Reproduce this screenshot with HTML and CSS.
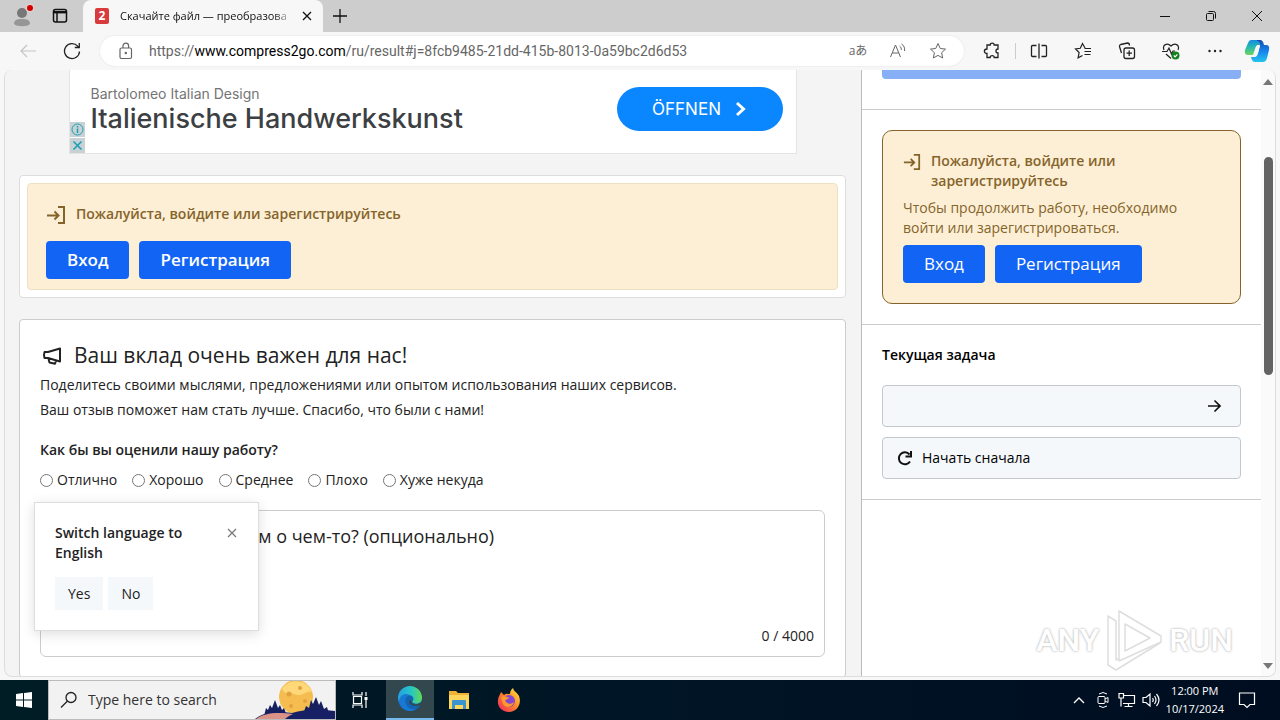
FILE: index.html
```html
<!DOCTYPE html>
<html lang="ru">
<head>
<meta charset="utf-8">
<title>Скачайте файл — преобразование</title>
<link rel="stylesheet" href="styles.css">
</head>
<body>
<header class="tabstrip">
  <button class="profile" aria-label="Profile">
    <svg width="24" height="24" viewBox="0 0 24 24"><circle cx="12" cy="9" r="5" fill="#777"/><path d="M4 20c0-4 3-5 8-5s8 1 8 5c-3 3-13 3-16 0z" fill="#969696"/><circle cx="20" cy="4" r="4" fill="#e8d0d0"/><circle cx="20" cy="4" r="3" fill="#d00000"/></svg>
  </button>
  <button class="workspaces" aria-label="Tab actions">
    <svg width="16" height="16" viewBox="0 0 16 16" fill="none" stroke="#111" stroke-width="1.5"><rect x="1.5" y="1.5" width="13" height="12.5" rx="2"/><path d="M1.5 4.2h13" stroke-width="2.4"/><path d="M5 4v10"/></svg>
  </button>
  <div class="tab">
    <span class="favicon">2</span>
    <span class="tab-title">Скачайте файл — преобразова</span>
    <button class="tab-close" aria-label="Close tab"><svg width="10" height="10" viewBox="0 0 10 10" stroke="#111" stroke-width="1.3"><path d="M1 1l8 8M9 1l-8 8"/></svg></button>
  </div>
  <button class="new-tab" aria-label="New tab"><svg width="14" height="14" viewBox="0 0 14 14" stroke="#111" stroke-width="1.3"><path d="M7 0v14M0 7h14"/></svg></button>
  <div class="window-controls">
    <button aria-label="Minimize"><svg width="12" height="12" viewBox="0 0 12 12" stroke="#111"><path d="M1 6.5h10"/></svg></button>
    <button aria-label="Restore"><svg width="12" height="12" viewBox="0 0 12 12" fill="none" stroke="#111"><rect x="1.5" y="3.5" width="7" height="7" rx="1"/><path d="M3.5 1.5h5a2 2 0 0 1 2 2v5"/></svg></button>
    <button aria-label="Close"><svg width="12" height="12" viewBox="0 0 12 12" stroke="#111"><path d="M1 1l10 10M11 1L1 11"/></svg></button>
  </div>
</header>

<nav class="toolbar">
  <button class="tool" aria-label="Back"><svg width="18" height="18" viewBox="0 0 18 18" fill="none" stroke="#c4c4c4" stroke-width="1.2"><path d="M17 9H2M8 3L2 9l6 6"/></svg></button>
  <button class="tool" aria-label="Refresh"><svg width="18" height="18" viewBox="0 0 18 18" fill="none" stroke="#222" stroke-width="1.3"><path d="M16.5 9.500a7.500 7.500 0 1 1-1.800-5.300L16 5.500M16.300 1v4.500h-4.500"/></svg></button>
  <div class="address">
    <svg width="16" height="18" viewBox="0 0 16 18" fill="none" stroke="#666" stroke-width="1.200"><rect x="2" y="6" width="11.500" height="10.500" rx="1.500"/><path d="M5 6V4a2.800 2.800 0 0 1 5.600 0v2"/><circle cx="7.800" cy="11" r=".6" fill="#666"/></svg>
    <span class="url">https://<b>www.compress2go.com</b>/ru/result#j=8fcb9485-21dd-415b-8013-0a59bc2d6d53</span>
    <button class="address-tool translate" aria-label="Translate">aあ</button>
    <button class="address-tool" aria-label="Read aloud"><svg width="18" height="18" viewBox="0 0 18 18" fill="none" stroke="#666"><path d="M1.500 15L6.500 3l5 12M3.200 11h6.600M10.500 4c1.500 1 2 2.500 1.800 4M12.500 2c2.500 1.500 3.500 4 3 7"/></svg></button>
    <button class="address-tool" aria-label="Favourite"><svg width="18" height="18" viewBox="0 0 18 18" fill="none" stroke="#666"><path d="M9 1.500l2.300 5 5.200.600-3.900 3.600 1.100 5.300L9 13.400 4.300 16l1.100-5.300L1.500 7.100l5.200-.6z"/></svg></button>
  </div>
  <button class="tool ext" aria-label="Extensions"><svg width="18" height="18" viewBox="0 0 18 18" fill="none" stroke="#222" stroke-width="1.300"><path d="M4 3h3.200c0-2.500 4-2.500 4 0H15v4c-2.700 0-2.700 4 0 4v4.500h-3.800c0-2.500-4-2.500-4 0H4V11.500c-3.500 0-3.500-4.500 0-4.500z"/></svg></button>
  <span class="tool-divider"></span>
  <button class="tool" aria-label="Split screen"><svg width="18" height="18" viewBox="0 0 18 18" fill="none" stroke="#222" stroke-width="1.300"><path d="M6.500 3.500h-4q-1 0-1 1v9q0 1 1 1h4M11.500 3.500h4q1 0 1 1v9q0 1-1 1h-4M9 1.500v15"/></svg></button>
  <button class="tool" aria-label="Favourites"><svg width="18" height="18" viewBox="0 0 18 18" fill="none" stroke="#222" stroke-width="1.200"><path d="M11 6L8.500 1.500 6.300 6.300 1.500 7l3.600 3.500-1 5.300L8.500 13.500M10.500 6.500h6.500M10.500 9.500h6.500M10.500 12.500h6"/></svg></button>
  <button class="tool" aria-label="Collections"><svg width="18" height="18" viewBox="0 0 18 18" fill="none" stroke="#222" stroke-width="1.300"><rect x="6" y="6" width="10.500" height="10.500" rx="2"/><path d="M11.200 8.500v5.500M8.500 11.200H14M3.500 11L1.500 4.500Q1.200 3 2.700 2.500L9.500 1q2 0 2 2.500"/></svg></button>
  <button class="tool" aria-label="Browser essentials"><svg width="18" height="18" viewBox="0 0 18 18" fill="none" stroke="#222" stroke-width="1.200"><path d="M2 8C0 3 5 0 9 4c4-4 9-1 7 4M0 9.500h5l2-3.500 2.500 6 1.500-3h2M4 12l5 4.500"/><circle cx="13.500" cy="13.500" r="4" fill="#15801e" stroke="none"/><path d="M11.800 13.500l1.300 1.300 2.300-2.500" stroke="#fff"/></svg></button>
  <button class="tool" aria-label="Settings and more"><svg width="18" height="18" viewBox="0 0 18 18" fill="#222"><circle cx="3.500" cy="9" r="1.200"/><circle cx="9" cy="9" r="1.200"/><circle cx="14.500" cy="9" r="1.200"/></svg></button>
  <button class="tool copilot" aria-label="Copilot"><svg width="26" height="24" viewBox="0 0 26 24"><defs><linearGradient id="cp1" x2="0" y2="1"><stop offset="0" stop-color="#1789e0"/><stop offset=".45" stop-color="#24b8b4"/><stop offset="1" stop-color="#6bd65c"/></linearGradient><linearGradient id="cp2" x2="0" y2="1"><stop offset="0" stop-color="#164dab"/><stop offset=".5" stop-color="#1683ed"/><stop offset="1" stop-color="#23c4ee"/></linearGradient></defs><path d="M7 1h8q3 0 4 5h-5q-2 0-3 4l-2 6H4q-4 0-3-5l3-7q1-3 3-3z" fill="url(#cp1)"/><path d="M13 1h3q3 0 4 5h2q4 0 3 5l-2 8q-1 4-4 4h-8q-3 0-4-5h4q2 0 3-4l2-8q0-4-3-4z" fill="url(#cp2)"/><path d="M13 9q1-2 3-2l-2 7q-1 3-3 3z" fill="#f7f7f7"/></svg></button>
</nav>

<div class="page">
  <main class="content">
    <aside class="ad">
      <div class="ad-copy">
        <span class="ad-brand">Bartolomeo Italian Design</span>
        <span class="ad-title">Italienische Handwerkskunst</span>
      </div>
      <button class="ad-button">ÖFFNEN <svg width="12" height="16" viewBox="0 0 12 16" fill="none" stroke="#fff" stroke-width="3"><path d="M2 2l6.500 6L2 14"/></svg></button>
      <div class="ad-marks">
        <svg width="15" height="15" viewBox="0 0 15 15" fill="none" stroke="#1b9fb5"><circle cx="7.500" cy="7.500" r="5.500"/><path d="M7.500 4v1.500M7.500 6.500V11" stroke-width="1.500"/></svg>
        <svg width="15" height="15" viewBox="0 0 15 15" stroke="#1b9fb5" stroke-width="1.600"><path d="M3.500 3.500l8 8M11.500 3.500l-8 8"/></svg>
      </div>
    </aside>

    <section class="card login-card">
      <div class="notice">
        <h2 class="notice-title"><svg width="20" height="22" viewBox="0 0 20 22" fill="none" stroke="#85642b" stroke-width="2"><path d="M1 11.500h11M8.500 7.500l4 4-4 4M12 3h6v16h-6"/></svg>Пожалуйста, войдите или зарегистрируйтесь</h2>
        <div class="actions"><button class="primary strong">Вход</button><button class="primary strong">Регистрация</button></div>
      </div>
    </section>

    <section class="card feedback">
      <h1 class="feedback-title"><svg width="22" height="20" viewBox="0 0 22 20" fill="none" stroke="#222" stroke-width="2" stroke-linejoin="round"><path d="M8 6L20 2.500v13L8 12H4.500q-1-3 0-6zM8.500 13l1 3.500 5.500 1.200 1-3"/></svg>Ваш вклад очень важен для нас!</h1>
      <p class="lead">Поделитесь своими мыслями, предложениями или опытом использования наших сервисов.</p>
      <p class="lead">Ваш отзыв поможет нам стать лучше. Спасибо, что были с нами!</p>
      <fieldset class="rating">
        <legend>Как бы вы оценили нашу работу?</legend>
        <div class="options">
          <label><input type="radio" name="rating">Отлично</label>
          <label><input type="radio" name="rating">Хорошо</label>
          <label><input type="radio" name="rating">Среднее</label>
          <label><input type="radio" name="rating">Плохо</label>
          <label><input type="radio" name="rating">Хуже некуда</label>
        </div>
      </fieldset>
      <div class="message">
        <textarea aria-label="Сообщение" placeholder="Вы хотите сообщить нам о чем-то? (опционально)"></textarea>
        <span class="counter">0 / 4000</span>
      </div>
    </section>
  </main>

  <aside class="sidebar">
    <section class="start"><button class="start-button" aria-label="Начать"></button></section>
    <section class="panel">
      <div class="notice bordered">
        <h2 class="notice-title"><svg width="18" height="22" viewBox="0 0 20 22" fill="none" stroke="#85642b" stroke-width="2"><path d="M1 11.500h11M8.500 7.500l4 4-4 4M12 3h6v16h-6"/></svg>Пожалуйста, войдите или зарегистрируйтесь</h2>
        <p class="notice-text">Чтобы продолжить работу, необходимо войти или зарегистрироваться.</p>
        <div class="actions"><button class="primary">Вход</button><button class="primary">Регистрация</button></div>
      </div>
    </section>
    <section class="panel">
      <h2 class="task-title">Текущая задача</h2>
      <div class="task-list">
        <button class="task next" aria-label="Далее"><svg width="14" height="14" viewBox="0 0 14 14" fill="none" stroke="#111" stroke-width="1.600"><path d="M1 7h12M7.500 1.500L13 7l-5.500 5.500"/></svg></button>
        <button class="task"><svg width="16" height="16" viewBox="0 0 16 16" fill="none" stroke="#111" stroke-width="2"><path d="M13 11.500A6 6 0 1 1 12.500 4.500M14 1v5.500H8.500"/></svg>Начать сначала</button>
      </div>
    </section>
  </aside>

  <div class="scrollbar">
    <svg width="10" height="8" viewBox="0 0 10 8" fill="#777"><path d="M0 7l5-6 5 6z"/></svg>
    <div class="track"><div class="thumb"></div></div>
    <svg width="10" height="8" viewBox="0 0 10 8" fill="#777"><path d="M0 1l5 6 5-6z"/></svg>
  </div>

  <div class="language" role="dialog" aria-labelledby="lang-title">
    <div class="language-head">
      <h2 id="lang-title">Switch language to English</h2>
      <button class="language-close" aria-label="Close"><svg width="10" height="10" viewBox="0 0 10 10" stroke="#777" stroke-width="1.200"><path d="M1 1l8 8M9 1l-8 8"/></svg></button>
    </div>
    <div class="language-actions"><button>Yes</button><button>No</button></div>
  </div>

  <div class="watermark">
    <span>ANY</span>
    <svg width="58" height="64" viewBox="0 0 58 64" fill="#fff" stroke="#dedede" stroke-width="1.500" stroke-linejoin="round"><path d="M3 8l8 5v39l41-22 3 5L11 62l-8-5z"/><path fill-rule="evenodd" d="M14 3l42 25v6L14 53zM20 16v27l25-13z"/></svg>
    <span>RUN</span>
  </div>
</div>

<footer class="taskbar">
  <button class="start-menu" aria-label="Start"><svg width="16" height="16" viewBox="0 0 16 16" fill="#fff"><path d="M0 2l7-1v6.500H0zM8 .900L16 0v7.500H8zM0 8.500h7V15l-7-1zM8 8.500h8V16l-8-1z"/></svg></button>
  <div class="search">
    <svg width="18" height="18" viewBox="0 0 18 18" fill="none" stroke="#222" stroke-width="1.300"><circle cx="11" cy="6.500" r="5"/><path d="M7.500 10L1 16.500"/></svg>
    <input type="text" aria-label="Search" placeholder="Type here to search">
    <svg width="80" height="38" viewBox="0 0 80 38"><circle cx="41" cy="16" r="17" fill="#f5bd4f"/><path d="M27 8a17 17 0 0 1 30 3c-5-3-10 6-18 2-5-2-8 2-12-5z" fill="#ffd979"/><g fill="#e3a040"><circle cx="34" cy="13" r="2.500"/><circle cx="45" cy="7" r="2"/><circle cx="36" cy="25" r="2"/><circle cx="50" cy="20" r="2"/></g><path d="M9 35l2-8 2 2 2-5 2 3 3-8 3 8 2-3 2 5 2-2 3 8zM48 33l3-8 3 2 2-8 2 4 3-7 3 8 2-4 3 8 3-2 2 7z" fill="#16205f"/><path d="M0 38c9-7 22-8 37-6 13-4 27-4 43-2v8z" fill="#172064"/><path d="M1 38c8-6 20-7 37-5-4 2-6 3-8 5z" fill="#db9388"/></svg>
  </div>
  <button class="app" aria-label="Task View"><svg width="18" height="18" viewBox="0 0 18 18" fill="none" stroke="#fff" stroke-width="1.200"><path d="M1 1v3h9V1M1 17v-3h9v3M1.500 5.500h8v7h-8zM14 1v4M14 9v8"/><path d="M12.500 6h3v3h-3z" fill="#fff" stroke="none"/></svg></button>
  <button class="app active" aria-label="Microsoft Edge"><svg width="26" height="26" viewBox="0 0 26 26"><defs><linearGradient id="edge"><stop offset="0" stop-color="#249fe6"/><stop offset=".55" stop-color="#27c6c4"/><stop offset="1" stop-color="#63d957"/></linearGradient></defs><circle cx="13" cy="13" r="12" fill="#1265b5"/><path d="M1 12a12 12 0 0 1 24 0c0 6-7 7-10 4 3-3 1-7-3-7-5 0-8 3-9 8-1-1-2-3-2-5z" fill="url(#edge)"/><path d="M2 15c1-7 8-9 12-5-5-1-7 4-5 8 2 5 7 6 10 5-7 5-16 0-17-8z" fill="#1979d2"/><path d="M14 14c0 5 6 6 11 2l-1 3c-4 2-11 1-12-3 0-1 1-2 2-2z" fill="#36474d"/></svg></button>
  <button class="app" aria-label="File Explorer"><svg width="22" height="20" viewBox="0 0 22 20"><path d="M1 1h7l2 2h11v16H1z" fill="#eeb333"/><path d="M1 5h20v14H1z" fill="#ffd65c"/><path d="M4 11q0-1 1-1h12q1 0 1 1v8h-3v-4H7v4H4z" fill="#3b94cf"/></svg></button>
  <button class="app" aria-label="Firefox"><svg width="24" height="24" viewBox="0 0 24 24"><defs><linearGradient id="fox" x1="1" x2="0" y2="1"><stop offset="0" stop-color="#fff04a"/><stop offset=".45" stop-color="#ff8a24"/><stop offset="1" stop-color="#ee2164"/></linearGradient></defs><path d="M4 4l3 3c2-2 4-1 6-1 0-3 1-4 3-6 1 4 4 4 6 8 3 8-2 16-10 16S0 18 1 12c0-3 2-5 3-8z" fill="url(#fox)"/><circle cx="12" cy="13" r="6" fill="#8546d1"/><path d="M4 9c4-2 6 0 9 1-2 0-3 2-5 2 1 4 6 5 9 2-1 5-8 7-11 2z" fill="#ff9a2b"/></svg></button>
  <div class="tray">
    <svg width="18" height="8" viewBox="0 0 18 8" fill="none" stroke="#fff" stroke-width="1.300"><path d="M4 7l5-5 5 5"/></svg>
    <svg width="18" height="18" viewBox="0 0 18 18" fill="none" stroke="#fff"><rect x="4" y="5.500" width="7" height="7" rx="1"/><path d="M11 8l3-1.500v5L11 10M5 3q4-3 8 0M5 15q4 3 8 0"/></svg>
    <svg width="18" height="16" viewBox="0 0 18 16" fill="none" stroke="#fff" stroke-width="1.200"><path d="M5 3.500h11.500v8H5M10.500 12v2.500M6.500 14.500h8M1 1.500h4.500V6H1zM3 6v8.500"/></svg>
    <svg width="18" height="16" viewBox="0 0 18 16" fill="none" stroke="#fff" stroke-width="1.200"><path d="M1 5.500h3l4-3.500v12l-4-3.500H1zM10.500 6q1.500 2 0 4M12.500 4q3 4 0 8M14.500 2q5 6 0 12"/></svg>
    <div class="clock"><span>12:00 PM</span><span>10/17/2024</span></div>
    <svg class="notify" width="18" height="18" viewBox="0 0 18 18" fill="none" stroke="#fff" stroke-width="1.200"><path d="M1.500 2h15v11.500H12l-3 3-3-3H1.500z"/></svg>
  </div>
</footer>
</body>
</html>
```
FILE: styles.css
```css
* { box-sizing: border-box; }
body {
  margin: 0;
  height: 100vh;
  display: flex;
  flex-direction: column;
  overflow: hidden;
  background: #f7f7f7;
  color: #222;
  font: 14px/20px "Open Sans", "Noto Sans", sans-serif;
}
button, input, textarea { font: inherit; color: inherit; }
button { border: 0; padding: 0; background: none; display: flex; align-items: center; justify-content: center; }
h1, h2, p { margin: 0; }
svg { flex: none; display: block; }

.tabstrip { display: flex; height: 32px; flex: none; background: #cdcdcd; }
.profile { width: 44px; }
.workspaces { width: 32px; }
.tab {
  display: flex; align-items: center; width: 240px; margin-left: 7px; padding: 0 8px 0 12px;
  background: #f7f7f7; border-radius: 8px 8px 0 0; color: #111;
}
.favicon { width: 14px; height: 16px; border-radius: 2px; background: #d93a3d; color: #fff; font: bold 12px/16px "Open Sans", sans-serif; text-align: center; }
.tab-title {
  flex: 1; margin-left: 11px; white-space: nowrap; font-size: 11px;
  mask-image: linear-gradient(to right, #000 88%, transparent);
}
.tab-close { width: 16px; height: 16px; margin-left: 5px; }
.new-tab { width: 34px; }
.window-controls { display: flex; margin-left: auto; }
.window-controls button { width: 46px; }

.toolbar { display: flex; align-items: center; height: 38px; flex: none; padding: 0 3px 0 6px; background: #f7f7f7; }
.tool { width: 44px; height: 32px; }
.address {
  display: flex; align-items: center; flex: 1; height: 30px; margin-left: 6px; margin-right: 6px; padding: 0 6px 0 18px;
  background: #fff; border-radius: 15px; box-shadow: 0 0 2px #ddd;
}
.url { flex: 1; margin-left: 15px; white-space: nowrap; color: #666; font: 14px/20px Roboto, sans-serif; }
.url b { font-weight: 400; color: #000; }
.address-tool { width: 40px; height: 28px; color: #666; }
.translate { font: 12px/16px "Open Sans", "Noto Sans CJK JP", sans-serif; }
.tool-divider { width: 1px; height: 16px; margin: 0 1px; background: #ccc; }
.copilot { width: 40px; }

.page {
  position: relative; display: grid; grid-template-columns: 1fr 400px 14px; flex: 1; min-height: 0;
  margin: 0 4px 3px; overflow: hidden; border: 1px solid #ddd; border-top: 0; border-radius: 8px; background: #f4f4f4;
}
.content { display: flex; flex-direction: column; gap: 21px; padding: 0 15px 0 14px; min-width: 0; }
.ad {
  position: relative; display: flex; align-items: center; justify-content: space-between; width: 728px; height: 84px; flex: none;
  align-self: center; padding: 0 13px 6px 21px; background: #fff; border: 1px solid #e4e4e4; border-top: 0;
}
.ad-copy { display: flex; flex-direction: column; padding-top: 2px; font-family: Inter, sans-serif; color: #3c4043; }
.ad-brand { font-size: 14px; line-height: 18px; color: #757575; }
.ad-title { font-size: 27px; line-height: 32px; font-weight: 500; }
.ad-button { gap: 14px; width: 166px; height: 44px; border-radius: 22px; background: #0a86ff; color: #fff; font: 17px/24px Inter, sans-serif; }
.ad-marks { position: absolute; left: 0; bottom: 0; display: flex; flex-direction: column; gap: 1px; }
.ad-marks svg { background: #c8d1d3; }

.card { background: #fff; border: 1px solid #ccc; border-radius: 4px; }
.login-card { padding: 7px; border-color: #ddd; }
.notice { padding: 20px 18px 10px; background: #fdefd5; border: 1px solid #eee0c4; border-radius: 4px; color: #85642b; }
.notice-title { display: flex; gap: 10px; font-size: 14px; line-height: 20px; font-weight: 600; }
.actions { display: flex; gap: 10px; margin-top: 15px; }
.primary { height: 38px; padding: 0 21px; border-radius: 4px; background: #1264f5; color: #fff; font-size: 17px; }
.strong { font-weight: 600; }
.feedback { flex: 1; padding: 20px; }
.feedback-title { display: flex; align-items: center; gap: 12px; margin-bottom: 1px; font-size: 21px; line-height: 31px; font-weight: 400; }
.lead { line-height: 25px; }
.rating { margin: 15px 0 0; padding: 0; border: 0; min-width: 0; }
.rating legend { padding: 0; line-height: 25px; font-weight: 600; }
.options { display: flex; gap: 15px; margin-top: 8px; }
.options label { display: flex; align-items: center; gap: 4px; }
.options input { width: 13px; height: 13px; margin: 0; }
.message { position: relative; display: flex; margin-top: 20px; }
.message textarea { width: 100%; height: 147px; padding: 13px 10px; border: 1px solid #ccc; border-radius: 6px; background: #fff; resize: none; font-size: 18px; line-height: 24px; }
.message textarea::placeholder { color: #222; opacity: 1; }
.counter { position: absolute; right: 11px; bottom: 11px; }

.sidebar { background: #fff; border-left: 1px solid #bbb; color: #000; }
.start { height: 40px; padding: 0 20px; border-bottom: 1px solid #ccc; }
.start-button { width: 100%; height: 9px; border-radius: 0 0 4px 4px; background: #86aff6; }
.panel { padding: 20px; border-bottom: 1px solid #ccc; }
.bordered { padding: 20px; border-color: #85642b; border-radius: 10px; }
.notice-text { margin-top: 7px; }
.bordered .actions { margin-top: 7px; }
.task-title { font-size: 14px; line-height: 20px; font-weight: 600; }
.task-list { display: flex; flex-direction: column; gap: 10px; margin-top: 20px; }
.task { justify-content: flex-start; gap: 9px; width: 100%; height: 42px; padding: 0 14px; border: 1px solid #c4c8cc; border-radius: 4px; background: #f5f8fb; }
.next { justify-content: flex-end; padding-right: 19px; }

.scrollbar { display: flex; flex-direction: column; align-items: center; padding: 8px 0; background: #fafafa; }
.track { flex: 1; width: 9px; padding-top: 71px; }
.thumb { height: 218px; border-radius: 5px; background: #636363; }

.language { position: absolute; left: 29px; bottom: 45px; width: 225px; padding: 20px; background: #fff; border: 1px solid #ddd; box-shadow: 0 3px 12px #0002; }
.language-head { display: flex; justify-content: space-between; align-items: flex-start; }
.language h2 { width: 150px; font-size: 14px; line-height: 20px; font-weight: 600; }
.language-close { width: 12px; height: 20px; }
.language-actions { display: flex; gap: 5px; margin-top: 14px; }
.language-actions button { height: 33px; padding: 0 13px; background: #f5f8fb; }

.watermark { position: absolute; right: 42px; bottom: 4px; display: flex; align-items: center; gap: 6px; }
.watermark span { color: #fff; font: 500 32px/44px Roboto, sans-serif; text-shadow: 0 0 2px #bbb, 0 0 3px #ccc; }

.taskbar { display: flex; height: 40px; flex: none; background: linear-gradient(90deg, #001c24, #001526 50%, #000d20); color: #fff; }
.start-menu { width: 48px; }
.search { display: flex; align-items: center; width: 288px; padding-left: 11px; background: #f2f2f2; border: 1px solid #bbb; }
.search input { flex: 1; min-width: 0; margin-left: 10px; padding: 0; border: 0; background: none; color: #333; }
.search input::placeholder { color: #333; opacity: 1; }
.app { width: 50px; }
.app.active { width: 48px; background: #33474e; border-bottom: 2px solid #76b9ed; }
.tray { display: flex; align-items: center; gap: 6px; margin-left: auto; padding-right: 24px; }
.clock { display: flex; flex-direction: column; align-items: center; font-size: 11px; line-height: 18px; }
.notify { margin-left: 8px; }
```
